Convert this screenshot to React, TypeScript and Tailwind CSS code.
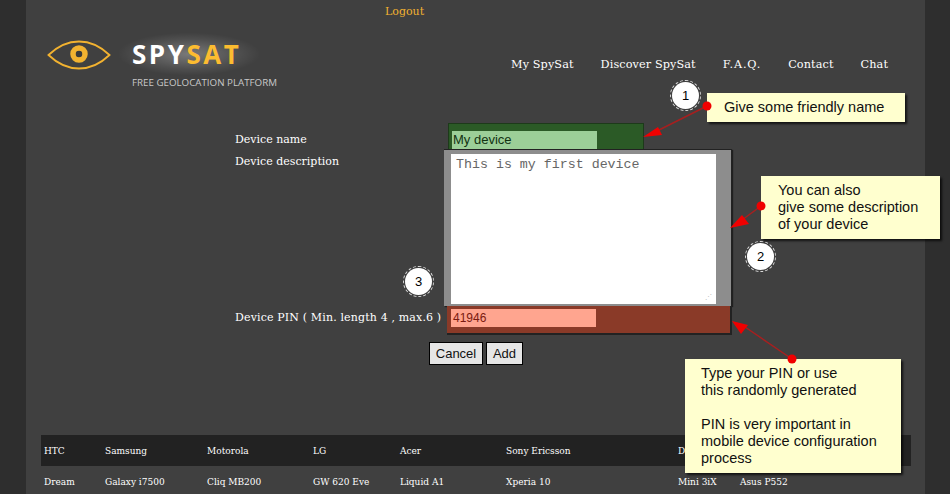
const headers = ["HTC", "Samsung", "Motorola", "LG", "Acer", "Sony Ericsson", "Dell", "", ""];
const row = ["Dream", "Galaxy i7500", "Cliq MB200", "GW 620 Eve", "Liquid A1", "Xperia 10", "Mini 3iX", "Asus P552", ""];
const colWidths = ["w-[61px]", "w-[102px]", "w-[106px]", "w-[87px]", "w-[106px]", "w-[172px]", "w-[62px]", "w-[100px]", "w-[74px]"];
const navItems = ["My SpySat", "Discover SpySat", "F.A.Q.", "Contact", "Chat"];

function Logo() {
  return (
    <div className="relative flex h-[60px] w-[240px] items-start">
      <svg width="64" height="30" viewBox="0 0 64 30" className="mt-[1px] shrink-0">
        <path d="M1.5 15 C14 3 24 1.5 32 1.5 C40 1.5 50 3 62.5 15 C50 27 40 28.5 32 28.5 C24 28.5 14 27 1.5 15 Z" fill="none" stroke="#f2b230" strokeWidth="1.8" />
        <circle cx="32" cy="14" r="6" fill="none" stroke="#f2b230" strokeWidth="5.5" />
        <circle cx="32" cy="14" r="3" fill="#3a3a3a" />
      </svg>
      <div className="absolute left-[72px] top-[-6px] h-[42px] w-[140px] bg-[radial-gradient(ellipse_at_center,rgba(255,255,255,0.3)_0%,rgba(255,255,255,0.08)_50%,rgba(255,255,255,0)_72%)]" />
      <div className="relative ml-[21px] flex flex-col">
        <div className="text-[26px] leading-[30px] font-bold tracking-[2.5px] font-['Open_Sans',sans-serif] text-white">
          SPY<span className="text-[#fcbc30]">SAT</span>
        </div>
        <div className="mt-[7px] text-[9.75px] whitespace-nowrap font-['Open_Sans',sans-serif] leading-[14px] text-[#c8c8c8]">FREE GEOLOCATION PLATFORM</div>
      </div>
    </div>
  );
}

function Badge({ n, className }: { n: number; className: string }) {
  return (
    <div className={`absolute flex h-[27px] w-[27px] items-center justify-center rounded-full bg-white text-[13px] text-black outline outline-1 outline-offset-1 outline-dashed outline-white/80 font-['Liberation_Sans',sans-serif] ${className}`}>
      {n}
    </div>
  );
}

function Note({ className, children }: { className: string; children: React.ReactNode }) {
  return (
    <div className={`absolute bg-[#ffffcf] text-[14.5px] leading-[17px] text-[#111] shadow-[2px_2px_2px_rgba(0,0,0,0.7)] font-['Liberation_Sans',sans-serif] ${className}`}>
      {children}
    </div>
  );
}

function Arrows() {
  return (
    <svg className="absolute left-0 top-0 h-[494px] w-[950px]" viewBox="0 0 950 494">
      <g stroke="#a81f1f" strokeWidth="1.5">
        <line x1="707" y1="106" x2="655" y2="132" />
        <line x1="761" y1="206" x2="742" y2="220" />
        <line x1="792" y1="359" x2="745" y2="327" />
      </g>
      <g fill="#f00000">
        <polygon points="643,137 658,127 662,135" />
        <polygon points="730,228 742,215 749,224" />
        <polygon points="732,321 748,325 741,334" />
        <circle cx="707" cy="106" r="4.5" />
        <circle cx="761" cy="206" r="4.5" />
        <circle cx="792" cy="359" r="4.5" />
      </g>
    </svg>
  );
}

export default function App() {
  return (
    <div className="relative h-[494px] w-[950px] overflow-hidden bg-[#2e2e2e] font-['DejaVu_Serif',serif]">
      <div className="ml-[26px] h-full w-[899px] bg-[#404040]">
        <div className="pl-[359px] pt-[4px] text-[11px] leading-[15px] text-[#f0b030]">Logout</div>

        <div className="flex items-start justify-between pl-[21px] pr-[37px] pt-[20px]">
          <Logo />
          <nav className="mt-[18px] flex gap-[27px] text-[11.25px] leading-[15px] tracking-[0.1px] text-white">
            {navItems.map((item) => (
              <span key={item} className={item === "F.A.Q." ? "tracking-[0.8px]" : ""}>{item}</span>
            ))}
          </nav>
        </div>

        <div className="mt-[24px] grid grid-cols-[209px_288px] pl-[209px] text-[11px] text-white">
          <div className="pt-[9px] leading-[15px]">Device name</div>
          <div className="pl-[4px]">
            <div className="h-[27px] w-[196px] border border-[#1d3a1a] bg-[#2b5a26] pl-[3px] pt-[7px]">
              <div className="h-[18px] w-[145px] bg-[#9ccf98] pl-[1px] text-[13px] leading-[18px] text-[#123312] font-['Liberation_Sans',sans-serif]">My device</div>
            </div>
          </div>

          <div className="pt-[4px] leading-[15px]">Device description</div>
          <div className="-mt-[1px]">
            <div className="h-[157px] w-[288px] border-t border-r border-[#222] bg-[#8d8d8d] pl-[7px] pt-[4px] shadow-[1px_1px_1px_rgba(0,0,0,0.5)]">
              <div className="relative h-[150px] w-[265px] bg-white pl-[5px] pt-[3px] text-[13.3px] leading-[16px] text-[#666] font-['Liberation_Mono',monospace]">
                This is my first device
                <span className="absolute bottom-[3px] right-[4px] text-[7px] leading-[8px] text-[#bbb]">⋰</span>
              </div>
            </div>
          </div>

          <div className="pt-[4px] leading-[15px] whitespace-nowrap tracking-[0.15px]">Device PIN ( Min. length 4 , max.6 )</div>
          <div className="pl-[3px]">
            <div className="h-[29px] w-[285px] border-b-2 border-r-2 border-[#222] bg-[#8a3a28] pl-[4px] pt-[3px]">
              <div className="h-[18px] w-[145px] bg-[#ffa58f] pl-[2px] text-[12px] leading-[18px] text-[#7a1a10] font-['Liberation_Sans',sans-serif]">41946</div>
            </div>
          </div>
        </div>

        <div className="ml-[403px] mt-[7px] flex gap-[3px] text-[13px] text-[#111] font-['Liberation_Sans',sans-serif]">
          <button className="h-[23px] w-[54px] border border-black bg-[#e6e6e6]">Cancel</button>
          <button className="h-[23px] w-[37px] border border-black bg-[#e6e6e6]">Add</button>
        </div>

        <div className="ml-[15px] mt-[70px] w-[870px] text-[9px] text-white">
          <div className="flex h-[31px] items-center bg-[#222] pl-[3px] pt-[3px]">
            {headers.map((h, i) => (
              <div key={i} className={`shrink-0 ${colWidths[i]}`}>{h}</div>
            ))}
          </div>
          <div className="flex h-[31px] items-center pl-[3px] pt-[3px]">
            {row.map((c, i) => (
              <div key={i} className={`shrink-0 ${colWidths[i]}`}>{c}</div>
            ))}
          </div>
        </div>
      </div>

      <Badge n={1} className="left-[672px] top-[82px]" />
      <Badge n={2} className="left-[747px] top-[243px]" />
      <Badge n={3} className="left-[405px] top-[268px]" />

      <Note className="left-[707px] top-[93px] h-[29px] w-[198px] pl-[17px] pt-[6px]">Give some friendly name</Note>
      <Note className="left-[761px] top-[176px] h-[63px] w-[179px] pl-[17px] pt-[6px]">
        You can also<br />give some description<br />of your device
      </Note>
      <Note className="left-[685px] top-[359px] h-[114px] w-[216px] pl-[16px] pt-[6px]">
        Type your PIN or use<br />this randomly generated<br /><br />PIN is very important in<br />mobile device configuration<br />process
      </Note>
      <Arrows />
    </div>
  );
}
